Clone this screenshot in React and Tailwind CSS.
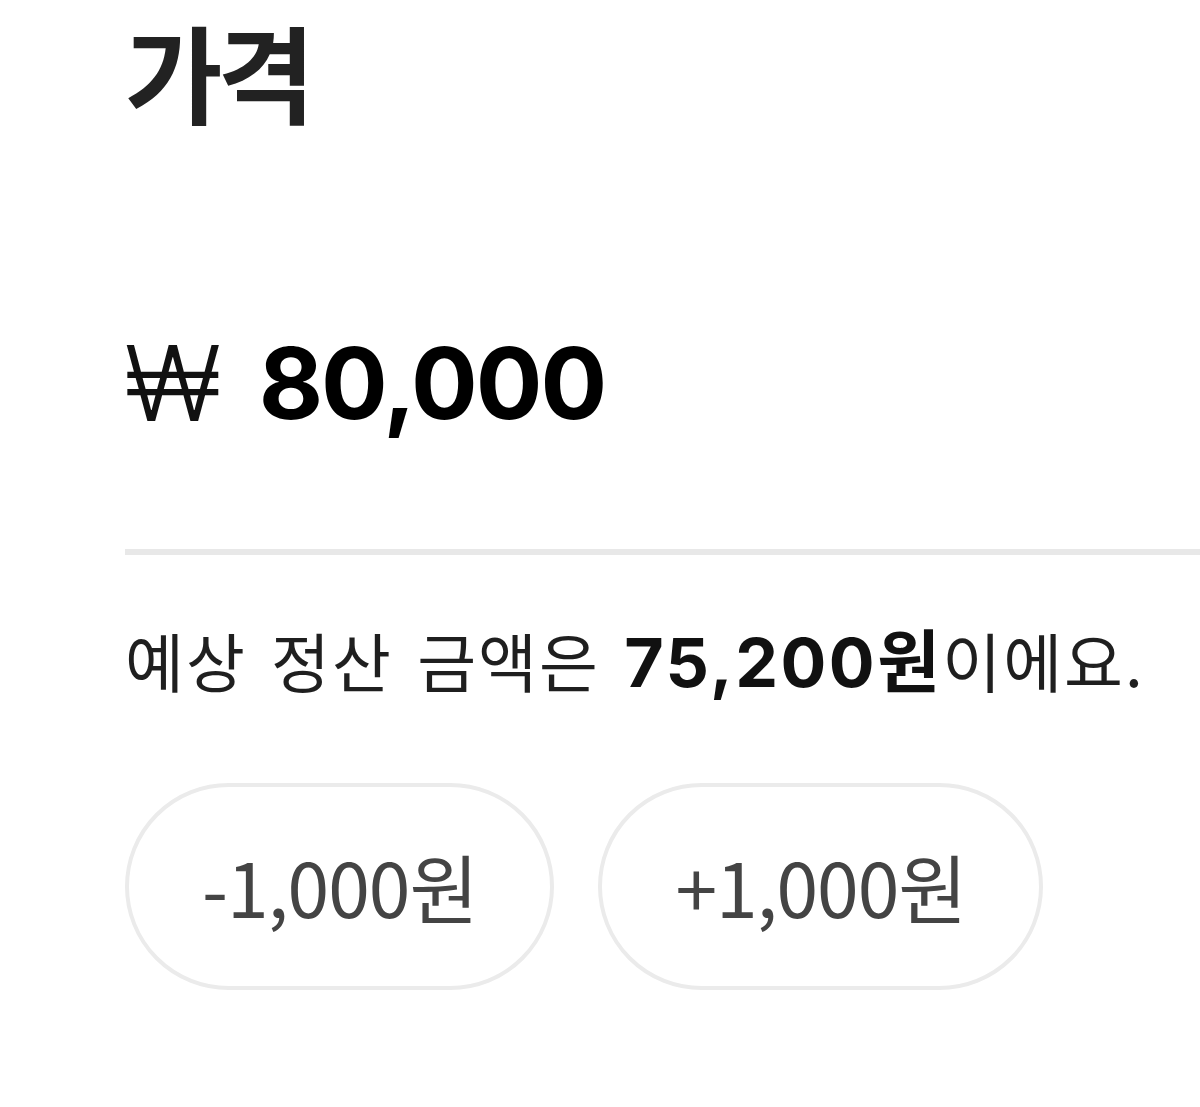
import React from 'react';

const PriceSection = () => {
  const steps = ['-1,000원', '+1,000원'];

  return (
    <div className="min-h-[1107px] bg-white pl-[125px] font-['Noto_Sans_CJK_KR',sans-serif] text-[#1a1a1a] overflow-hidden">
      {/* 제목 */}
      <h1 className="pt-[5px] text-[106px] font-bold leading-[130px] tracking-[-5px] text-[#222]">가격</h1>

      {/* 가격 입력 */}
      <div className="mt-[193px] flex items-center h-[110px]">
        <span className="font-['Inter',sans-serif] text-[104px] font-light leading-none text-[#111]">₩</span>
        <span className="ml-[38px] font-['Inter',sans-serif] text-[99px] font-bold leading-none tracking-[-2px] text-black">80,000</span>
      </div>

      <div className="mt-[111px] h-[6px] bg-[#e8e8e8]" />

      {/* 정산 금액 */}
      <p className="mt-[64px] whitespace-nowrap text-[64px] leading-[80px] tracking-[2px] [word-spacing:8px] text-[#1f1f1f]">
        예상 정산 금액은{' '}
        <span className="font-['Inter','Noto_Sans_CJK_KR',sans-serif] text-[68px] font-bold tracking-[2.5px] text-[#111]">75,200원</span>
        이에요.
      </p>

      <div className="mt-[81px] flex gap-[44px]">
        {steps.map((label) => (
          <button
            key={label}
            type="button"
            className="h-[207px] px-[73px] rounded-full border-[4px] border-[#ebebeb] bg-white text-[75px] tracking-[-1px] text-[#444]"
          >
            {label}
          </button>
        ))}
      </div>
    </div>
  );
};

export default function App() {
  return <PriceSection />;
}
